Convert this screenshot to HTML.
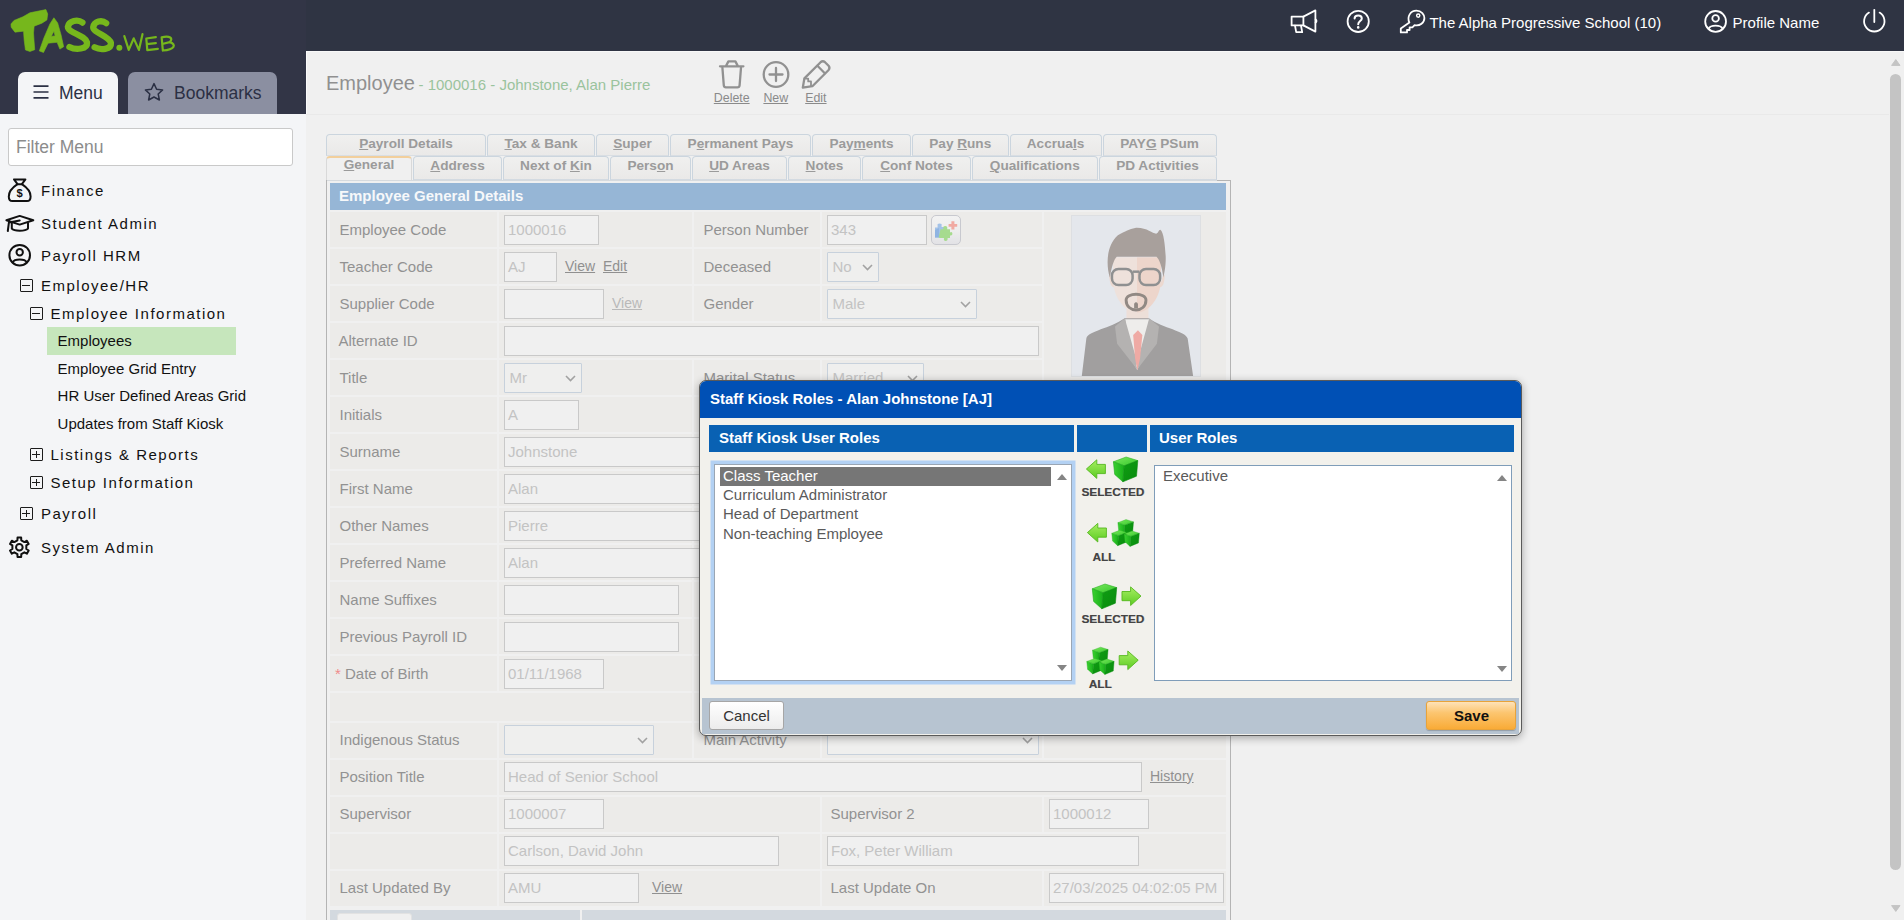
<!DOCTYPE html>
<html>
<head>
<meta charset="utf-8">
<title>Employee</title>
<style>
*{box-sizing:border-box;margin:0;padding:0}
html,body{width:1904px;height:920px;overflow:hidden}
body{font-family:"Liberation Sans",sans-serif;background:#f0f0f0;position:relative;color:#222}
.abs{position:absolute}
/* top bar */
#topbar{position:absolute;left:0;top:0;width:1904px;height:51px;background:#2f3443}
#topline{position:absolute;left:306px;top:51px;width:1598px;height:1px;background:#f8f8f8}
#sidehead{position:absolute;left:0;top:0;width:306px;height:114px;background:#323546}
#sidebar{position:absolute;left:0;top:114px;width:306px;height:806px;background:#f4f5f7}
.toptxt{position:absolute;color:#fff;font-size:15px;white-space:nowrap}
/* side tabs */
#tabmenu{position:absolute;left:18px;top:72px;width:100px;height:42px;background:#f4f5f7;border-radius:7px 7px 0 0}
#tabbook{position:absolute;left:128px;top:72px;width:149px;height:42px;background:#8b8fa1;border-radius:7px 7px 0 0}
.tabtxt{position:absolute;font-size:17.5px;color:#2b3044;white-space:nowrap}
#filter{position:absolute;left:8px;top:128px;width:285px;height:37.5px;background:#fff;border:1px solid #c9c9c9;border-radius:3px}
#filter span{position:absolute;left:7px;top:8px;font-size:17.5px;color:#8c8c8c}
.m1{position:absolute;left:41px;font-size:15px;letter-spacing:1.5px;color:#111;white-space:nowrap}
.m2{position:absolute;font-size:15px;letter-spacing:1.5px;color:#111;white-space:nowrap}
.m3{position:absolute;left:57.6px;font-size:15px;color:#111;white-space:nowrap}
.box{position:absolute;width:13px;height:13px;border:1.4px solid #1c1c1c;border-radius:1px}
.box:before{content:"";position:absolute;left:1.3px;top:4.5px;width:7.8px;height:1.3px;background:#1c1c1c}
.box.plus:after{content:"";position:absolute;left:4.55px;top:1.6px;width:1.3px;height:7.2px;background:#1c1c1c}
#hl{position:absolute;left:47px;top:327px;width:189px;height:28px;background:#c6e6bc}
/* content */
#title{position:absolute;left:326px;top:72px;font-size:20px;color:#909090;white-space:nowrap}
#title small{font-size:15px;color:#9ac39d;margin-left:-2px}
.act{position:absolute;font-size:12.4px;color:#8a8a8a;text-decoration:underline;white-space:nowrap}
#hr1{position:absolute;left:306px;top:114px;width:1583px;height:1px;background:#e9e9e9}

.cell{position:absolute;background:#ecebe9}
.lbl{position:absolute;font-size:15px;color:#929292;white-space:nowrap;line-height:17px}
.lnk{position:absolute;font-size:14px;color:#909090;white-space:nowrap;text-decoration:underline;line-height:17px}
.inp{position:absolute;border:1px solid #c9c9c9;background:#f0f0f0;font-size:15px;color:#c3c3c3;padding:5px 0 0 3px;line-height:17px;white-space:nowrap;overflow:hidden}
.sel{position:absolute;height:30px;border:1px solid #c7d1dc;background:#efefee;font-size:15px;color:#c3c3c3;padding:5px 0 0 4.5px;line-height:17px;white-space:nowrap;border-radius:1px}
.tab{position:absolute;height:22px;border:1px solid #cbd5de;border-bottom:1px solid #d9dee3;border-radius:4px 4px 0 0;background:linear-gradient(#f0f0ef,#eae9e8);font-size:13.6px;font-weight:bold;color:#9b9b9b;text-align:center;line-height:17px;white-space:nowrap}
.tab u{text-decoration:underline}
.tab.r2{height:24px;line-height:17.5px;border-bottom:1px solid #d3dae1}
.tab.on{background:#f0f0f0;border-color:#d9d9d9;border-top:2px solid #f2cf9c;height:25px;line-height:14.5px;border-bottom:none}
#panel{position:absolute;left:326px;top:180px;width:905px;height:760px;border:1px solid #b4b4b4}
#phead{position:absolute;left:330px;top:183px;width:896px;height:27px;background:#96b6d6;color:#f6f8fa;font-weight:bold;font-size:15px;line-height:25px;padding-left:9px}
#bbar{position:absolute;left:330px;top:909.5px;width:896px;height:12px;background:#d3d9df}

#photo{position:absolute;left:1071px;top:215px;width:130px;height:162px;background:#e4e7ec;border:1px solid #dddfe2;overflow:hidden}
#pbtn{position:absolute;left:931px;top:215px;width:30px;height:30px;border:1px solid #c8c9cf;border-radius:5px;background:linear-gradient(#f2f2f2,#eeeeee 50%,#e2e2e6)}
#sbthumb{position:absolute;left:1890px;top:74px;width:11px;height:796px;border-radius:6px;background:#c4c4c4}
#modal{position:absolute;left:699px;top:380px;width:823px;height:356px;border:1px solid #5a5a5a;border-radius:7px;background:#f2f1ec;box-shadow:0 2px 8px rgba(0,0,0,.33);overflow:hidden}
#mtitle{position:absolute;left:0;top:0;width:100%;height:37px;background:#0050b5;color:#fff;font-weight:bold;font-size:15px;line-height:36px;padding-left:10px}
.mh{position:absolute;top:44px;height:27px;background:#0961b3;color:#fff;font-weight:bold;font-size:15px;line-height:25px;padding-left:10px}
#lb1{position:absolute;left:14px;top:83px;width:358px;height:217px;border:1px solid #9aa6b4;background:#fff;box-shadow:0 0 0 3.5px #b3d1f3;}
#lb2{position:absolute;left:454px;top:83.5px;width:358px;height:216px;border:1px solid #7f9db9;background:#fff}
.li{position:absolute;left:8px;font-size:15px;color:#5a5a5a;line-height:19px;white-space:nowrap;margin-top:-1px}
#lsel{position:absolute;left:5px;top:2px;width:331px;height:19px;background:#767676}
.arr{position:absolute;width:0;height:0;border-left:5px solid transparent;border-right:5px solid transparent}
.arr.up{border-bottom:6.5px solid #858585}
.arr.dn{border-top:6.5px solid #858585}
.ml{position:absolute;font-size:11.8px;font-weight:bold;color:#444;text-shadow:0.4px 0.4px 0.6px #aaa;white-space:nowrap;line-height:12px}
#mfoot{position:absolute;left:2px;top:317px;width:817px;height:36px;background:#b7c4d1}
#bcancel{position:absolute;left:9px;top:320px;width:75px;height:29px;border:1px solid #a6a6a6;border-radius:3px;background:linear-gradient(#ffffff,#ececec);font-size:15px;color:#333;text-align:center;line-height:27px}
#bsave{position:absolute;left:726px;top:320px;width:90px;height:29px;border:1px solid #e8a33a;border-radius:3px;background:linear-gradient(#fee2b8,#fcc56f 40%,#f9ab37);text-indent:1px;font-size:15px;font-weight:bold;color:#111;text-align:center;line-height:27px;box-shadow:0 1px 1px rgba(0,0,0,.2)}
</style>
</head>
<body>
<div id="topbar"></div>
<div id="sidehead"></div>
<div id="topline"></div>
<div id="sidebar"></div>
<div id="hr1"></div><div class="abs" style="left:306px;top:51px;width:1px;height:63px;background:#fbfbfb"></div>


<!-- TOPBAR ICONS -->
<svg class="abs" style="left:1280px;top:0" width="160" height="50" viewBox="1280 0 160 50" fill="none" stroke="#fff" stroke-width="1.8" stroke-linejoin="round" stroke-linecap="round">
<path d="M1291.6 16.6 H1303.4 V25.4 H1291.6 Z"/>
<path d="M1303.4 16.6 L1315.4 10.4 V31.6 L1303.4 25.4"/>
<path d="M1315.6 19.4 Q1317.4 21 1315.6 22.6"/>
<path d="M1295 25.6 L1296.2 32.2 H1302.2 L1301 25.6"/>
<circle cx="1358.2" cy="21.4" r="10.6"/>
<path d="M1354.6 18.4 C1354.6 14.4 1361.8 14.4 1361.8 18.4 C1361.8 21 1358.2 21 1358.2 24.2" stroke-width="2"/>
<circle cx="1358.2" cy="27.4" r="0.6" stroke-width="1.4"/>
<path d="M1409.4 22.6 C1406.6 16.6 1410.6 10.6 1416.4 10.6 C1421.6 10.6 1424.4 14.6 1424.4 18 C1424.4 22.6 1420 26.4 1414.6 25.2 L1412.4 27.4 H1409.6 V30 H1407 V32.4 H1400.8 V28.6 Z"/>
<circle cx="1418.2" cy="15.6" r="1.6" stroke-width="1.4"/>
</svg>
<div class="toptxt" style="left:1429.4px;top:13.6px">The Alpha Progressive School (10)</div>
<svg class="abs" style="left:1700px;top:0" width="204" height="50" viewBox="1700 0 204 50" fill="none" stroke="#fff" stroke-width="1.8" stroke-linejoin="round" stroke-linecap="round">
<circle cx="1715.6" cy="21.4" r="10.4"/>
<circle cx="1715.6" cy="18.4" r="3.3"/>
<path d="M1708.6 28.6 C1710.4 24.6 1720.8 24.6 1722.6 28.6"/>
<path d="M1874.3 9.8 V22"/>
<path d="M1869 12.6 A10.2 10.2 0 1 0 1879.6 12.6"/>
</svg>
<div class="toptxt" style="left:1732.6px;top:13.6px">Profile Name</div>
<!-- SIDEBAR -->
<div id="tabmenu"></div>
<div id="tabbook"></div>
<div id="filter"><span>Filter Menu</span></div>
<div id="hl"></div>

<svg class="abs" style="left:0;top:0" width="190" height="64" viewBox="0 0 1904 641">
<g fill="#76b71c" stroke="#76b71c" stroke-linejoin="round" stroke-width="6">
<path d="M110 240 L140 205 L230 168 L300 128 L460 96 L478 140 L470 200 L420 232 L342 262 L336 330 L342 420 L348 498 L300 516 L255 500 L242 400 L236 312 L150 322 L112 272 Z"/>
<path fill-rule="evenodd" d="M540 178 L578 230 L612 350 L638 468 L600 492 L572 424 L482 432 L436 526 L394 510 L440 380 L500 240 Z M514 362 L541 312 L552 360 Z"/>
</g>
<g fill="none" stroke="#76b71c" stroke-width="63" stroke-linecap="round" stroke-linejoin="round">
<path d="M826 226 C780 190 690 206 680 268 C680 330 852 350 872 425 C878 494 760 504 696 470"/>
<path d="M1064 232 C1020 196 944 212 934 272 C934 330 1096 360 1112 430 C1118 498 1006 504 948 474"/>
</g>
<circle cx="1196" cy="478" r="30" fill="#76b71c"/>
<g fill="none" stroke="#76b71c" stroke-width="22" stroke-linecap="round" stroke-linejoin="round">
<path d="M1246 362 L1290 500 L1340 384 L1392 500 L1428 342"/>
<path d="M1562 372 L1466 386 L1476 502 L1582 490 M1472 442 L1562 432"/>
<path d="M1620 374 L1632 508 M1620 374 C1700 352 1742 384 1700 422 L1636 438 M1700 422 C1772 444 1752 500 1632 506"/>
</g>
</svg>

<!-- menu tab icons -->
<svg class="abs" style="left:33px;top:84px" width="16" height="16" viewBox="0 0 16 16"><path d="M0.5 2.2H15.5M0.5 8H15.5M0.5 13.8H15.5" stroke="#2b3044" stroke-width="1.7" fill="none"/></svg>
<div class="tabtxt" style="left:59px;top:83px">Menu</div>
<svg class="abs" style="left:144px;top:82px" width="20" height="20" viewBox="0 0 20 20"><path d="M10 1.6 L12.6 7.2 L18.6 7.9 L14.2 12 L15.4 18 L10 15 L4.6 18 L5.8 12 L1.4 7.9 L7.4 7.2 Z" stroke="#2b3044" stroke-width="1.5" fill="none" stroke-linejoin="round"/></svg>
<div class="tabtxt" style="left:174px;top:83px">Bookmarks</div>


<svg class="abs" style="left:0;top:170px" width="40" height="100" viewBox="0 170 40 100" fill="none" stroke="#111" stroke-width="2" stroke-linejoin="round" stroke-linecap="round">
<path d="M14 179.4 H25.4 L21.9 184.2 C27 187.6 30.6 192.4 30.6 196.4 C30.6 199.4 29 201 27 201 H12.4 C10.4 201 8.8 199.4 8.8 196.4 C8.8 192.4 12.4 187.6 17.5 184.2 Z"/>
<path d="M17.5 184.2 H21.9" />
<path d="M6.4 220.2 L19.7 215.9 L33.3 220.2 L19.7 224.6 Z"/>
<path d="M11.8 223 V228.6 C14 231.4 25.4 231.4 28 228.6 V223"/>
<path d="M19.7 220.4 L8.9 222.6 L7.8 231" />
<circle cx="19.7" cy="255.2" r="10.3"/>
<circle cx="19.7" cy="252.2" r="3.2"/>
<path d="M12.6 262.4 C14.6 258.6 24.8 258.6 26.8 262.4"/>
</svg>
<div class="abs" style="left:16.6px;top:187.3px;font-size:11.2px;font-weight:bold;color:#111;line-height:12px">$</div>
<svg class="abs" style="left:0;top:530px" width="40" height="40" viewBox="0 530 40 40" fill="none" stroke="#111" stroke-width="2" stroke-linejoin="round">
<path d="M17.41 540.27 L17.53 537.47 L21.17 537.47 L21.29 540.27 L24.39 542.05 L26.87 540.76 L28.69 543.91 L26.32 545.41 L26.32 548.99 L28.69 550.49 L26.87 553.64 L24.39 552.35 L21.29 554.13 L21.17 556.93 L17.53 556.93 L17.41 554.13 L14.31 552.35 L11.83 553.64 L10.01 550.49 L12.38 548.99 L12.38 545.41 L10.01 543.91 L11.83 540.76 L14.31 542.05 Z"/>
<circle cx="19.35" cy="547.2" r="3.3"/>
</svg>
<!-- menu -->
<div class="m1" style="top:182px">Finance</div>
<div class="m1" style="top:215px">Student Admin</div>
<div class="m1" style="top:247px">Payroll HRM</div>
<div class="box" style="left:20px;top:279px"></div>
<div class="m2" style="left:41px;top:277px">Employee/HR</div>
<div class="box" style="left:30px;top:307px"></div>
<div class="m2" style="left:50.5px;top:305px">Employee Information</div>
<div class="m3" style="top:332px">Employees</div>
<div class="m3" style="top:360px">Employee Grid Entry</div>
<div class="m3" style="top:387px">HR User Defined Areas Grid</div>
<div class="m3" style="top:415px">Updates from Staff Kiosk</div>
<div class="box plus" style="left:30px;top:448px"></div>
<div class="m2" style="left:50.5px;top:446px">Listings &amp; Reports</div>
<div class="box plus" style="left:30px;top:476px"></div>
<div class="m2" style="left:50.5px;top:474px">Setup Information</div>
<div class="box plus" style="left:20px;top:507px"></div>
<div class="m2" style="left:41px;top:505px">Payroll</div>
<div class="m1" style="top:539px">System Admin</div>

<!-- CONTENT -->
<div id="title">Employee <small>- 1000016 - Johnstone, Alan Pierre</small></div>

<div class="tab" style="left:326px;top:134px;width:160px"><u>P</u>ayroll Details</div>
<div class="tab" style="left:487px;top:134px;width:108px"><u>T</u>ax &amp; Bank</div>
<div class="tab" style="left:596px;top:134px;width:73px"><u>S</u>uper</div>
<div class="tab" style="left:670px;top:134px;width:141px">P<u>e</u>rmanent Pays</div>
<div class="tab" style="left:812px;top:134px;width:99px">Pay<u>m</u>ents</div>
<div class="tab" style="left:912px;top:134px;width:96.5px">Pay <u>R</u>uns</div>
<div class="tab" style="left:1009.5px;top:134px;width:92px">Accrua<u>l</u>s</div>
<div class="tab" style="left:1102.5px;top:134px;width:114px">PAY<u>G</u> PSum</div>
<div class="tab r2 on" style="left:326px;top:155.5px;width:86px"><u>G</u>eneral</div>
<div class="tab r2" style="left:413px;top:156px;width:89px"><u>A</u>ddress</div>
<div class="tab r2" style="left:503px;top:156px;width:106px">Next of <u>K</u>in</div>
<div class="tab r2" style="left:610px;top:156px;width:81px">Pers<u>o</u>n</div>
<div class="tab r2" style="left:692px;top:156px;width:95px"><u>U</u>D Areas</div>
<div class="tab r2" style="left:788px;top:156px;width:73px"><u>N</u>otes</div>
<div class="tab r2" style="left:862px;top:156px;width:109px"><u>C</u>onf Notes</div>
<div class="tab r2" style="left:972px;top:156px;width:125.5px"><u>Q</u>ualifications</div>
<div class="tab r2" style="left:1098.5px;top:156px;width:118px">PD Act<u>i</u>vities</div>
<svg class="abs" style="left:700px;top:52px" width="150" height="45" viewBox="700 52 150 45" fill="none" stroke="#919191" stroke-width="2.3" stroke-linejoin="round" stroke-linecap="round">
<path d="M720 66.3 H743.4 M726.2 65.6 L728.4 61.4 H735.4 L737.6 65.6"/>
<path d="M722.4 67.6 L723.8 85.4 Q724 87.4 726 87.4 H737.4 Q739.4 87.4 739.6 85.4 L741 67.6"/>
<circle cx="776" cy="74.5" r="12.3"/>
<path d="M776 68 V81 M769.5 74.5 H782.5"/>
<path d="M802.8 87.6 L804.4 78.4 L820.6 62.2 Q822.8 60.2 825 62.2 L828.6 65.8 Q830.4 68 828.4 70.2 L812.4 86.2 Z"/>
<path d="M817.4 65.8 L824.8 73.2" />
<path d="M804.6 78.6 H808.2 V81.4 H811 V85.8" stroke-width="1.8"/>
</svg>
<div class="act" style="left:713.8px;top:90.5px">Delete</div>
<div class="act" style="left:763.4px;top:90.5px">New</div>
<div class="act" style="left:805.2px;top:90.5px">Edit</div>
<div id="panel"></div><div class="abs" style="left:327px;top:180px;width:890px;height:1px;background:#d6dade"></div>
<div id="phead">Employee General Details</div>
<!--FORM-->
<div class="cell" style="left:330px;top:211.5px;width:167px;height:35px"></div>
<div class="cell" style="left:499px;top:211.5px;width:193px;height:35px"></div>
<div class="cell" style="left:694px;top:211.5px;width:126px;height:35px"></div>
<div class="cell" style="left:822px;top:211.5px;width:220px;height:35px"></div>
<div class="lbl" style="left:339.5px;top:220.5px">Employee Code</div>
<div class="cell" style="left:330px;top:248.5px;width:167px;height:35px"></div>
<div class="cell" style="left:499px;top:248.5px;width:193px;height:35px"></div>
<div class="cell" style="left:694px;top:248.5px;width:126px;height:35px"></div>
<div class="cell" style="left:822px;top:248.5px;width:220px;height:35px"></div>
<div class="lbl" style="left:339.5px;top:257.5px">Teacher Code</div>
<div class="cell" style="left:330px;top:285.5px;width:167px;height:35px"></div>
<div class="cell" style="left:499px;top:285.5px;width:193px;height:35px"></div>
<div class="cell" style="left:694px;top:285.5px;width:126px;height:35px"></div>
<div class="cell" style="left:822px;top:285.5px;width:220px;height:35px"></div>
<div class="lbl" style="left:339.5px;top:294.5px">Supplier Code</div>
<div class="cell" style="left:330px;top:322.5px;width:167px;height:35px"></div>
<div class="cell" style="left:499px;top:322.5px;width:543px;height:35px"></div>
<div class="lbl" style="left:338.5px;top:331.5px">Alternate ID</div>
<div class="cell" style="left:330px;top:359.5px;width:167px;height:35px"></div>
<div class="cell" style="left:499px;top:359.5px;width:193px;height:35px"></div>
<div class="cell" style="left:694px;top:359.5px;width:126px;height:35px"></div>
<div class="cell" style="left:822px;top:359.5px;width:220px;height:35px"></div>
<div class="lbl" style="left:339.5px;top:368.5px">Title</div>
<div class="cell" style="left:330px;top:396.5px;width:167px;height:35px"></div>
<div class="cell" style="left:499px;top:396.5px;width:193px;height:35px"></div>
<div class="cell" style="left:694px;top:396.5px;width:126px;height:35px"></div>
<div class="cell" style="left:822px;top:396.5px;width:220px;height:35px"></div>
<div class="lbl" style="left:339.5px;top:405.5px">Initials</div>
<div class="cell" style="left:330px;top:433.5px;width:167px;height:35px"></div>
<div class="cell" style="left:499px;top:433.5px;width:193px;height:35px"></div>
<div class="cell" style="left:694px;top:433.5px;width:126px;height:35px"></div>
<div class="cell" style="left:822px;top:433.5px;width:220px;height:35px"></div>
<div class="lbl" style="left:339.5px;top:442.5px">Surname</div>
<div class="cell" style="left:330px;top:470.5px;width:167px;height:35px"></div>
<div class="cell" style="left:499px;top:470.5px;width:193px;height:35px"></div>
<div class="cell" style="left:694px;top:470.5px;width:126px;height:35px"></div>
<div class="cell" style="left:822px;top:470.5px;width:220px;height:35px"></div>
<div class="lbl" style="left:339.5px;top:479.5px">First Name</div>
<div class="cell" style="left:330px;top:507.5px;width:167px;height:35px"></div>
<div class="cell" style="left:499px;top:507.5px;width:193px;height:35px"></div>
<div class="cell" style="left:694px;top:507.5px;width:126px;height:35px"></div>
<div class="cell" style="left:822px;top:507.5px;width:220px;height:35px"></div>
<div class="lbl" style="left:339.5px;top:516.5px">Other Names</div>
<div class="cell" style="left:330px;top:544.5px;width:167px;height:35px"></div>
<div class="cell" style="left:499px;top:544.5px;width:193px;height:35px"></div>
<div class="cell" style="left:694px;top:544.5px;width:126px;height:35px"></div>
<div class="cell" style="left:822px;top:544.5px;width:220px;height:35px"></div>
<div class="lbl" style="left:339.5px;top:553.5px">Preferred Name</div>
<div class="cell" style="left:330px;top:581.5px;width:167px;height:35px"></div>
<div class="cell" style="left:499px;top:581.5px;width:193px;height:35px"></div>
<div class="cell" style="left:694px;top:581.5px;width:126px;height:35px"></div>
<div class="cell" style="left:822px;top:581.5px;width:220px;height:35px"></div>
<div class="lbl" style="left:339.5px;top:590.5px">Name Suffixes</div>
<div class="cell" style="left:330px;top:618.5px;width:167px;height:35px"></div>
<div class="cell" style="left:499px;top:618.5px;width:193px;height:35px"></div>
<div class="cell" style="left:694px;top:618.5px;width:126px;height:35px"></div>
<div class="cell" style="left:822px;top:618.5px;width:220px;height:35px"></div>
<div class="lbl" style="left:339.5px;top:627.5px">Previous Payroll ID</div>
<div class="cell" style="left:330px;top:655.5px;width:167px;height:35px"></div>
<div class="cell" style="left:499px;top:655.5px;width:193px;height:35px"></div>
<div class="cell" style="left:694px;top:655.5px;width:126px;height:35px"></div>
<div class="cell" style="left:822px;top:655.5px;width:220px;height:35px"></div>
<div class="lbl" style="left:335px;top:664.5px;color:#f08a8a">*</div>
<div class="lbl" style="left:345px;top:664.5px">Date of Birth</div>
<div class="cell" style="left:1044px;top:211.5px;width:182px;height:479px"></div>
<div class="cell" style="left:330px;top:692.5px;width:362px;height:28px"></div>
<div class="cell" style="left:694px;top:692.5px;width:532px;height:28px"></div>
<div class="cell" style="left:330px;top:722.5px;width:167px;height:35px"></div>
<div class="cell" style="left:499px;top:722.5px;width:193px;height:35px"></div>
<div class="cell" style="left:694px;top:722.5px;width:126px;height:35px"></div>
<div class="cell" style="left:822px;top:722.5px;width:220px;height:35px"></div>
<div class="cell" style="left:1044px;top:722.5px;width:182px;height:35px"></div>
<div class="lbl" style="left:339.5px;top:730.5px">Indigenous Status</div>
<div class="sel" style="left:504px;top:725px;width:150px"><svg width="11" height="7" viewBox="0 0 11 7" style="position:absolute;right:5px;top:11px"><path d="M1 1 L5.5 5.5 L10 1" fill="none" stroke="#a2a2a2" stroke-width="1.6"/></svg></div>
<div class="lbl" style="left:703.5px;top:730.5px">Main Activity</div>
<div class="sel" style="left:827px;top:725px;width:212px"><svg width="11" height="7" viewBox="0 0 11 7" style="position:absolute;right:5px;top:11px"><path d="M1 1 L5.5 5.5 L10 1" fill="none" stroke="#a2a2a2" stroke-width="1.6"/></svg></div>
<div class="cell" style="left:330px;top:759.5px;width:167px;height:35px"></div>
<div class="cell" style="left:499px;top:759.5px;width:727px;height:35px"></div>
<div class="lbl" style="left:339.5px;top:767.5px">Position Title</div>
<div class="inp" style="left:504px;top:762px;width:638px;height:30px">Head of Senior School</div>
<div class="lnk" style="left:1150px;top:767.5px">History</div>
<div class="cell" style="left:330px;top:796.5px;width:167px;height:35px"></div>
<div class="cell" style="left:499px;top:796.5px;width:321px;height:35px"></div>
<div class="cell" style="left:822px;top:796.5px;width:220px;height:35px"></div>
<div class="cell" style="left:1044px;top:796.5px;width:182px;height:35px"></div>
<div class="lbl" style="left:339.5px;top:804.5px">Supervisor</div>
<div class="inp" style="left:504px;top:799px;width:100px;height:30px">1000007</div>
<div class="lbl" style="left:830.5px;top:804.5px">Supervisor 2</div>
<div class="inp" style="left:1049px;top:799px;width:100px;height:30px">1000012</div>
<div class="cell" style="left:330px;top:833.5px;width:167px;height:35px"></div>
<div class="cell" style="left:499px;top:833.5px;width:321px;height:35px"></div>
<div class="cell" style="left:822px;top:833.5px;width:404px;height:35px"></div>
<div class="inp" style="left:504px;top:836px;width:275px;height:30px">Carlson, David John</div>
<div class="inp" style="left:827px;top:836px;width:312px;height:30px">Fox, Peter William</div>
<div class="cell" style="left:330px;top:870.5px;width:167px;height:35px"></div>
<div class="cell" style="left:499px;top:870.5px;width:321px;height:35px"></div>
<div class="cell" style="left:822px;top:870.5px;width:220px;height:35px"></div>
<div class="cell" style="left:1044px;top:870.5px;width:182px;height:35px"></div>
<div class="lbl" style="left:339.5px;top:878.5px">Last Updated By</div>
<div class="inp" style="left:504px;top:873px;width:135px;height:30px">AMU</div>
<div class="lnk" style="left:652px;top:878.5px">View</div>
<div class="lbl" style="left:830.5px;top:878.5px">Last Update On</div>
<div class="inp" style="left:1049px;top:873px;width:175px;height:30px">27/03/2025 04:02:05 PM</div>
<div class="inp" style="left:504px;top:215px;width:95px;height:30px">1000016</div>
<div class="lbl" style="left:703.5px;top:220.5px">Person Number</div>
<div class="inp" style="left:827px;top:215px;width:100px;height:30px">343</div>
<div class="inp" style="left:504px;top:252px;width:53px;height:30px">AJ</div>
<div class="lnk" style="left:565px;top:257.5px">View</div>
<div class="lnk" style="left:603px;top:257.5px">Edit</div>
<div class="lbl" style="left:703.5px;top:257.5px">Deceased</div>
<div class="sel" style="left:827px;top:252px;width:52px">No<svg width="11" height="7" viewBox="0 0 11 7" style="position:absolute;right:5px;top:11px"><path d="M1 1 L5.5 5.5 L10 1" fill="none" stroke="#a2a2a2" stroke-width="1.6"/></svg></div>
<div class="inp" style="left:504px;top:289px;width:100px;height:30px"></div>
<div class="lnk" style="left:612px;top:294.5px;color:#b9b9b9">View</div>
<div class="lbl" style="left:703.5px;top:294.5px">Gender</div>
<div class="sel" style="left:827px;top:289px;width:150px">Male<svg width="11" height="7" viewBox="0 0 11 7" style="position:absolute;right:5px;top:11px"><path d="M1 1 L5.5 5.5 L10 1" fill="none" stroke="#a2a2a2" stroke-width="1.6"/></svg></div>
<div class="inp" style="left:504px;top:326px;width:535px;height:30px"></div>
<div class="sel" style="left:504px;top:363px;width:78px">Mr<svg width="11" height="7" viewBox="0 0 11 7" style="position:absolute;right:5px;top:11px"><path d="M1 1 L5.5 5.5 L10 1" fill="none" stroke="#a2a2a2" stroke-width="1.6"/></svg></div>
<div class="lbl" style="left:703.5px;top:368.5px">Marital Status</div>
<div class="sel" style="left:827px;top:363px;width:97px">Married<svg width="11" height="7" viewBox="0 0 11 7" style="position:absolute;right:5px;top:11px"><path d="M1 1 L5.5 5.5 L10 1" fill="none" stroke="#a2a2a2" stroke-width="1.6"/></svg></div>
<div class="inp" style="left:504px;top:400px;width:75px;height:30px">A</div>
<div class="inp" style="left:504px;top:437px;width:300px;height:30px">Johnstone</div>
<div class="inp" style="left:504px;top:474px;width:300px;height:30px">Alan</div>
<div class="inp" style="left:504px;top:511px;width:300px;height:30px">Pierre</div>
<div class="inp" style="left:504px;top:548px;width:300px;height:30px">Alan</div>
<div class="inp" style="left:504px;top:585px;width:175px;height:30px"></div>
<div class="inp" style="left:504px;top:622px;width:175px;height:30px"></div>
<div class="inp" style="left:504px;top:659px;width:100px;height:30px">01/11/1968</div>
<!--/FORM-->
<div id="photo"><svg width="130" height="162" viewBox="0 0 680 847">
<path d="M285 440 H400 V580 H285 Z" fill="#eddfd8"/>
<path d="M200 305 Q190 300 198 340 Q204 375 222 372 Z M478 305 Q490 300 482 340 Q476 375 458 372 Z" fill="#ecd9d0"/>
<path d="M215 215 H340 V505 C270 500 215 420 215 330 Z" fill="#eee1db"/>
<path d="M340 215 H465 V330 C465 420 410 500 340 505 Z" fill="#edd5cb"/>
<path d="M198 322 C176 250 182 150 240 100 C280 78 300 68 330 62 C390 58 420 92 440 92 C455 88 450 74 462 72 C480 84 486 150 490 210 C492 260 482 300 478 322 C472 270 457 225 442 213 H234 C220 225 206 270 198 322 Z" fill="#a8a09c"/>
<g fill="none" stroke="#8f9091" stroke-width="13" transform="translate(-5 -9)"><rect x="214" y="286" width="108" height="84" rx="34"/><rect x="358" y="286" width="108" height="84" rx="34"/><path d="M322 300 H358"/></g>
<path d="M288 450 C288 410 392 410 392 450 C392 520 288 520 288 450 Z" fill="none" stroke="#918984" stroke-width="15" transform="translate(-5 -11)"/>
<path d="M330 470 Q340 455 350 470 V495 H330 Z" fill="#918984" transform="translate(-5 -11)"/>
<path d="M50 847 L75 640 C85 600 200 590 275 535 H400 C480 590 590 600 605 640 L635 847 Z" fill="#a19f9f"/>
<path d="M278 540 H404 L372 745 L341 805 L308 745 Z" fill="#eeedeb"/>
<path d="M276 535 L225 578 L236 668 L340 802 L346 782 Z M404 535 L455 578 L444 668 L342 802 L336 782 Z" fill="#b4b2b1"/>
<path d="M320 622 L345 598 L368 622 L356 745 L342 806 L330 745 Z" fill="#efaaa4"/>
</svg></div>
<div id="pbtn"><svg width="28" height="28" viewBox="0 0 28 28" style="filter:blur(.45px)">
<path d="M3 21.6 V11.4 H5.6 V8 Q7.6 7.2 9.6 8 V11 H12 V21.6 Z" fill="#a3c2e8"/>
<path d="M3 21.6 V14 L7 12 V21.6 Z" fill="#8fb4e2"/>
<path d="M8.6 13.2 H11.4 Q10.6 10 13.2 10 Q15.8 10 15.2 13.2 H18 V16.4 Q20.4 15.4 20.4 17.8 Q20.4 20 18 19.4 V22 H15.6 Q16 25 13.6 25 Q11.4 25 12 22 H8 L6.6 21.6 Z" fill="#a6db8e"/>
<path d="M16.6 8 H19.4 V5.2 H22.4 V8 H25.2 V10.8 H22.4 V13.6 H19.4 V10.8 H16.6 Z" fill="#f1aaa2"/>
</svg></div>

<div id="bbar"></div><div class="abs" style="left:580px;top:909px;width:2px;height:12px;background:#f0f0f0"></div><div class="abs" style="left:337px;top:912.5px;width:75px;height:12px;background:#f0f0f0;border:1px solid #e2e2e2;border-radius:3px"></div>

<svg width="0" height="0" style="position:absolute">
<defs>
<linearGradient id="gTop" x1="0" y1="0" x2="1" y2="1"><stop offset="0" stop-color="#7ae85c"/><stop offset="1" stop-color="#35c82c"/></linearGradient>
<linearGradient id="gLeft" x1="0" y1="0" x2="1" y2="0"><stop offset="0" stop-color="#3bd130"/><stop offset="1" stop-color="#18ad1a"/></linearGradient>
<linearGradient id="gRight" x1="0" y1="0" x2="1" y2="1"><stop offset="0" stop-color="#0e9f12"/><stop offset="1" stop-color="#0a8a0e"/></linearGradient>
<linearGradient id="gArr" x1="0" y1="0" x2="0" y2="1"><stop offset="0" stop-color="#a6ee62"/><stop offset="1" stop-color="#5ccc22"/></linearGradient>
<g id="cube"><path d="M0.3 4.8 L13 0 L24.7 3.6 L11.2 8.8 Z" fill="url(#gTop)" stroke="#2fb426" stroke-width=".6" stroke-linejoin="round"/><path d="M0.3 4.8 L11.2 8.8 L9.8 24.8 L1.6 17.4 Z" fill="url(#gLeft)" stroke="#1ea81c" stroke-width=".6" stroke-linejoin="round"/><path d="M11.2 8.8 L24.7 3.6 L23.4 19.2 L9.8 24.8 Z" fill="url(#gRight)" stroke="#0c8f10" stroke-width=".6" stroke-linejoin="round"/></g>
<g id="arrL"><path d="M0.4 9.6 L10.8 0.4 V5 H19.4 V14.2 H10.8 V19 Z" fill="url(#gArr)" stroke="#55b81e" stroke-width=".9" stroke-linejoin="round"/></g>
</defs></svg>

<div id="sbthumb"></div>
<svg class="abs" style="left:1889px;top:55px" width="14" height="14"><path d="M2.6 10.4 L6.8 4.6 L11 10.4 Z" fill="#c4c4c4" stroke="#c4c4c4" stroke-width="1" stroke-linejoin="round"/></svg>
<svg class="abs" style="left:1889px;top:902px" width="14" height="14"><path d="M2.6 3.6 L6.8 9.4 L11 3.6 Z" fill="#c4c4c4" stroke="#c4c4c4" stroke-width="1" stroke-linejoin="round"/></svg>
<div id="modal">
<div id="mtitle">Staff Kiosk Roles - Alan Johnstone [AJ]</div>
<div class="mh" style="left:9px;width:365px">Staff Kiosk User Roles</div>
<div class="mh" style="left:377px;width:70px"></div>
<div class="mh" style="left:450px;width:364px;padding-left:9px">User Roles</div>
<div id="lb1"><div id="lsel"></div>
<div class="li" style="top:2px;color:#fff">Class Teacher</div>
<div class="li" style="top:21px">Curriculum Administrator</div>
<div class="li" style="top:40px">Head of Department</div>
<div class="li" style="top:60px">Non-teaching Employee</div>
<div class="arr up" style="left:341.5px;top:9px"></div><div class="arr dn" style="left:341.5px;top:200px"></div>
</div>
<div id="lb2"><div class="li" style="top:1px;left:8px">Executive</div>
<div class="arr up" style="left:341.5px;top:9px"></div><div class="arr dn" style="left:341.5px;top:200px"></div>
</div>
<svg class="abs" style="left:-1px;top:-1px" width="823" height="356"><use href="#arrL" transform="translate(387 79.4)"/><use href="#cube" transform="translate(414.1 77) scale(1)"/><use href="#arrL" transform="translate(388 143)"/><use href="#cube" transform="translate(418.7 139.6) scale(0.64)"/><use href="#cube" transform="translate(412.6 150.3) scale(0.62)"/><use href="#cube" transform="translate(425 151) scale(0.62)"/><use href="#cube" transform="translate(393 204) scale(1)"/><use href="#arrL" transform="translate(442.4 206.5) scale(-1 1)"/><use href="#cube" transform="translate(393.3 267.2) scale(0.64)"/><use href="#cube" transform="translate(387.6 278.5) scale(0.62)"/><use href="#cube" transform="translate(399.8 279.1) scale(0.62)"/><use href="#arrL" transform="translate(439.6 270.6) scale(-1 1)"/></svg>
<div class="ml" style="left:381.4px;top:104.5px">SELECTED</div>
<div class="ml" style="left:392.4px;top:169.5px">ALL</div>
<div class="ml" style="left:381.4px;top:231.5px">SELECTED</div>
<div class="ml" style="left:388.8px;top:296.5px">ALL</div>
<div id="mfoot"></div>
<div id="bcancel">Cancel</div>
<div id="bsave">Save</div>
</div>

</body>
</html>
